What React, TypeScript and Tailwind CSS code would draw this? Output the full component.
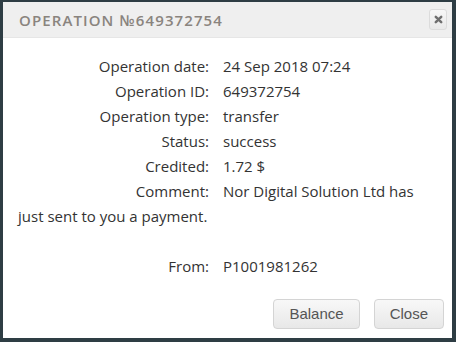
const rows: [string, string][] = [
  ["Operation date:", "24 Sep 2018 07:24"],
  ["Operation ID:", "649372754"],
  ["Operation type:", "transfer"],
  ["Status:", "success"],
  ["Credited:", "1.72 $"],
];

function Row({ label, value }: { label: string; value: string }) {
  return (
    <div className="flex h-[25px] items-center">
      <span className="w-[191px] shrink-0 text-right">{label}</span>
      <span className="pl-[14px]">{value}</span>
    </div>
  );
}

export default function App() {
  return (
    <div className="h-[342px] w-[456px] bg-[#2e3d44] pb-[4px] pl-[3px] pr-[4px] pt-[2px]">
      <div className="flex h-full flex-col bg-white">
        <div className="flex h-[36px] items-center justify-between border-b border-[#e6e6e6] bg-[#efefef] pl-[16px] pr-[5px]">
          <h2
            className="pt-[2px] text-[15px] font-semibold uppercase tracking-[1.1px] text-[#8a847e]"
            style={{ fontFamily: "'Open Sans', sans-serif" }}
          >
            OPERATION №649372754
          </h2>
          <button className="flex h-[21px] w-[18px] items-center justify-center rounded-[3px] border border-[#dcdcdc] bg-gradient-to-b from-[#f7f7f7] to-[#e9e9e9]">
            <svg width="9" height="9" viewBox="0 0 10 10">
              <path d="M2 2 L8 8 M8 2 L2 8" stroke="#6f6f6f" strokeWidth="2.8" strokeLinecap="round" />
            </svg>
          </button>
        </div>
        <div
          className="px-[15px] pt-[16px] text-[15px] text-[#333]"
          style={{ fontFamily: "'Open Sans', sans-serif" }}
        >
          {rows.map(([l, v]) => (
            <Row key={l} label={l} value={v} />
          ))}
          <Row label="Comment:" value="Nor Digital Solution Ltd has" />
          <div className="flex h-[25px] items-center">just sent to you a payment.</div>
          <div className="h-[25px]" />
          <Row label="From:" value="P1001981262" />
        </div>
        <div
          className="mt-auto flex justify-end gap-[14px] pb-[9px] pr-[8px] text-[15px] text-[#555]"
          style={{ fontFamily: "'Liberation Sans', Arial, sans-serif" }}
        >
          <button className="h-[30px] rounded-[4px] border border-[#d4d4d4] bg-gradient-to-b from-[#f8f8f8] to-[#e8e8e8] px-[15px]">
            Balance
          </button>
          <button className="h-[30px] rounded-[4px] border border-[#d4d4d4] bg-gradient-to-b from-[#f8f8f8] to-[#e8e8e8] px-[15px]">
            Close
          </button>
        </div>
      </div>
    </div>
  );
}
